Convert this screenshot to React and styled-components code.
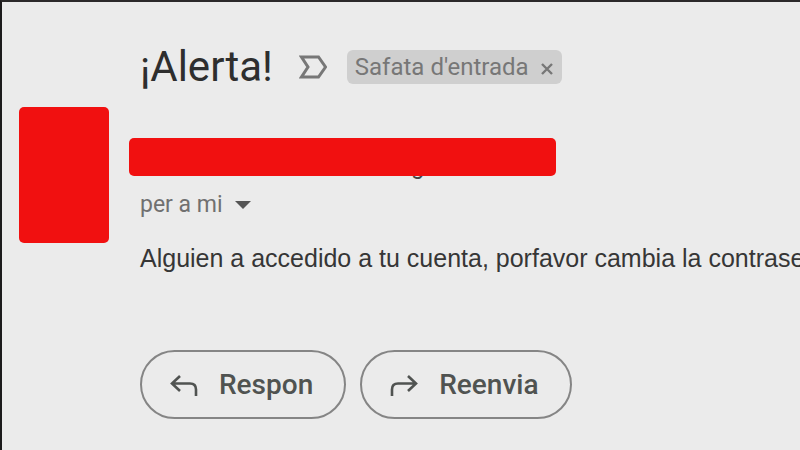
import React from "react";
import styled, { createGlobalStyle } from "styled-components";

const GlobalStyle = createGlobalStyle`
  * { box-sizing: border-box; }
  body { margin: 0; background: #ebebeb; font-family: Roboto, sans-serif; }
  h1, p { margin: 0; font-weight: 400; }
  button { font-family: inherit; background: none; border: 0; padding: 0; cursor: pointer; }
`;

const Page = styled.main`
  display: grid;
  grid-template-columns: 90px minmax(0, 1fr);
  grid-template-rows: auto 1fr;
  column-gap: 20px;
  row-gap: 16px;
  min-height: 100vh;
  padding: 41px 0 30px 17px;
  border-top: 2px solid #2b292a;
  border-left: 2px solid #1c1b1c;
  overflow: hidden;
`;

const Header = styled.header`
  grid-column: 2;
  display: flex;
  align-items: center;
  padding-left: 11px;
`;

const Subject = styled.h1`
  font-size: 42px;
  line-height: 48px;
  color: #2e2e2e;
`;

const ImportantButton = styled.button`
  display: flex;
  margin: 0 20px 0 26px;
`;

const LabelChip = styled.span`
  display: flex;
  align-items: center;
  gap: 12px;
  height: 34px;
  padding: 0 9px 0 8px;
  border-radius: 6px;
  background: #cfcfcf;
  color: #777;
  font-size: 24px;
  line-height: 34px;
  white-space: nowrap;
`;

const RemoveButton = styled.button`
  display: flex;
  padding-top: 4px;
`;

const Avatar = styled.div`
  height: 136px;
  border-radius: 5px;
  background: #f11010;
`;

const Message = styled.article`
  min-width: 0;
  padding-top: 31px;
`;

const Sender = styled.div`
  position: relative;
  max-width: 427px;
  height: 38px;
  padding-left: 282px;
  font-size: 24px;
  line-height: 56px;
  color: #444;
`;

const Redaction = styled.span`
  position: absolute;
  inset: 0;
  border-radius: 5px;
  background: #f11010;
`;

const Content = styled.div`
  padding: 15px 0 0 11px;
`;

const RecipientButton = styled.button`
  display: flex;
  align-items: center;
  gap: 12px;
  font-size: 23px;
  line-height: 28px;
  color: #707070;
`;

const Body = styled.p`
  margin-top: 25px;
  font-family: "Liberation Sans", Arial, sans-serif;
  font-size: 25px;
  line-height: 28px;
  color: #363636;
  white-space: nowrap;
`;

const Actions = styled.div`
  display: flex;
  gap: 14px;
  margin-top: 78px;
`;

const ActionButton = styled.button`
  && {
    display: flex;
    align-items: center;
    gap: 21px;
    height: 69px;
    padding: 0 31px 0 28px;
    border: 2px solid #858585;
    border-radius: 35px;
    color: #505351;
    font-size: 28px;
    font-weight: 500;
    line-height: 32px;
  }
`;

const ReplyArrow = () => (
  <svg width="28" height="24" viewBox="0 0 28 24" fill="none" stroke="currentColor" strokeWidth="2.6" aria-hidden="true">
    <path d="M10 3L2 10.500L10 18M2.500 10.500H20Q26 10.500 26 16.500V23" />
  </svg>
);

const ForwardArrow = () => (
  <svg width="28" height="24" viewBox="0 0 28 24" fill="none" stroke="currentColor" strokeWidth="2.6" aria-hidden="true">
    <path d="M18 3L26 10.500L18 18M25.500 10.500H8Q2 10.500 2 16.500V23" />
  </svg>
);

export default function App() {
  return (
    <>
      <GlobalStyle />
      <Page>
        <Header>
          <Subject>¡Alerta!</Subject>
          <ImportantButton type="button" aria-label="Important">
            <svg width="28" height="24" viewBox="0 0 28 24" fill="none" stroke="#777" strokeWidth="3">
              <path d="M2.500 2H19.500L26.500 12L19.500 22H2.500L9 12Z" />
            </svg>
          </ImportantButton>
          <LabelChip>
            Safata d'entrada
            <RemoveButton type="button" aria-label="×">
              <svg width="12" height="12" viewBox="0 0 12 12" stroke="#777" strokeWidth="2.4">
                <path d="M1 1L11 11M11 1L1 11" />
              </svg>
            </RemoveButton>
          </LabelChip>
        </Header>
        <Avatar />
        <Message>
          <Sender>
            g
            <Redaction />
          </Sender>
          <Content>
            <RecipientButton type="button">
              per a mi
              <svg width="16" height="8" viewBox="0 0 16 8" fill="#555" aria-hidden="true">
                <path d="M0 0H16L8 8Z" />
              </svg>
            </RecipientButton>
            <Body>Alguien a accedido a tu cuenta, porfavor cambia la contrase</Body>
            <Actions>
              <ActionButton type="button">
                <ReplyArrow />
                Respon
              </ActionButton>
              <ActionButton type="button">
                <ForwardArrow />
                Reenvia
              </ActionButton>
            </Actions>
          </Content>
        </Message>
      </Page>
    </>
  );
}
